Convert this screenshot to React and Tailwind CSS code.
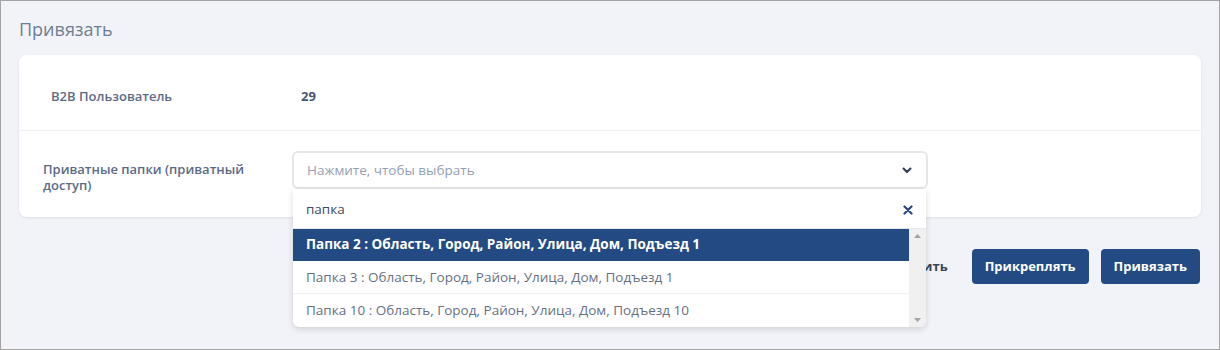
import React, { useState } from 'react';

const folders = [
  'Папка 2 : Область, Город, Район, Улица, Дом, Подъезд 1',
  'Папка 3 : Область, Город, Район, Улица, Дом, Подъезд 1',
  'Папка 10 : Область, Город, Район, Улица, Дом, Подъезд 10',
];

function App() {
  const [query, setQuery] = useState('папка');
  const [active, setActive] = useState(0);

  return (
    <div className="w-[1220px] h-[350px] border border-[#a3a3a3] bg-[#f2f3f8] pl-[18px] pr-[18px] font-['Open_Sans',sans-serif] overflow-hidden">
      <h1 className="pt-[16px] text-[18px] leading-[24px] text-[#6f7d93] font-normal">Привязать</h1>
      <div className="relative mt-[14px] bg-white rounded-lg shadow-[0_1px_3px_rgba(0,0,0,0.08)]">
        <div className="flex items-center h-[76px] pt-[8px] border-b border-[#eef0f4]">
          <div className="w-[250px] pl-[32px] text-[13px] font-semibold text-[#5b6b86]">B2B Пользователь</div>
          <div className="pl-[32px] text-[13px] font-bold text-[#4a5670]">29</div>
        </div>
        <div className="flex h-[86px] pt-[20px]">
          <div className="w-[273px] pl-[24px] pr-[40px] pt-[10px] text-[13px] leading-[16px] font-semibold text-[#5b6b86]">
            Приватные папки (приватный доступ)
          </div>
          <div className="relative w-[636px]">
            <div className="flex items-center justify-between h-[38px] px-[13px] border-2 border-[#e4e6ea] rounded-md bg-white">
              <span className="text-[13.5px] text-[#94a0b5]">Нажмите, чтобы выбрать</span>
              <svg width="12" height="12" viewBox="0 0 12 12" fill="none" stroke="#2f3a4f" strokeWidth="2" strokeLinecap="round" strokeLinejoin="round">
                <path d="M2.5 4.5 6 8l3.5-3.5" />
              </svg>
            </div>
            <div className="absolute left-[1px] top-[38px] w-[633px] bg-white rounded-b-md shadow-[0_2px_6px_rgba(0,0,0,0.15)] z-10">
              <div className="flex items-center h-[40px] px-[13px] pt-[2px] border-b border-[#e6e8ec]">
                <input
                  value={query}
                  onChange={(e) => setQuery(e.target.value)}
                  className="flex-1 outline-none text-[13.5px] text-[#3f4a5e] bg-transparent"
                />
                <svg width="10" height="10" viewBox="0 0 10 10" stroke="#2c4a80" strokeWidth="2.2" strokeLinecap="round">
                  <path d="M1.5 1.5l7 7M8.5 1.5l-7 7" />
                </svg>
              </div>
              <div className="flex">
                <div className="flex-1">
                  {folders.map((f, i) => (
                    <div
                      key={f}
                      onMouseEnter={() => setActive(i)}
                      className={
                        i === active
                          ? 'h-[32px] flex items-center px-[13px] text-[13.5px] font-bold text-white bg-[#234a82] border-b border-[#234a82]'
                          : 'h-[33px] flex items-center px-[13px] text-[13.5px] text-[#667085] border-b border-[#eef0f3] last:border-b-0'
                      }
                    >
                      {f}
                    </div>
                  ))}
                </div>
                <div className="w-[17px] bg-[#f0f0f0] flex flex-col justify-between items-center py-[5px] rounded-br-md">
                  <svg width="7" height="4" viewBox="0 0 7 4"><path d="M0 4 3.5 0 7 4Z" fill="#a3a3a3" /></svg>
                  <svg width="7" height="4" viewBox="0 0 7 4"><path d="M0 0h7L3.5 4Z" fill="#a3a3a3" /></svg>
                </div>
              </div>
            </div>
          </div>
        </div>
      </div>
      <div className="flex justify-end items-center gap-[12px] mt-[32px] mr-[1px]">
        <button className="px-[12px] h-[35px] text-[13px] font-bold text-[#3a4558]">Прикрепить</button>
        <button className="px-[13px] h-[35px] rounded bg-[#234a82] text-white text-[13px] font-bold">Прикреплять</button>
        <button className="px-[13px] h-[35px] rounded bg-[#234a82] text-white text-[13px] font-bold">Привязать</button>
      </div>
    </div>
  );
}

export default App;
